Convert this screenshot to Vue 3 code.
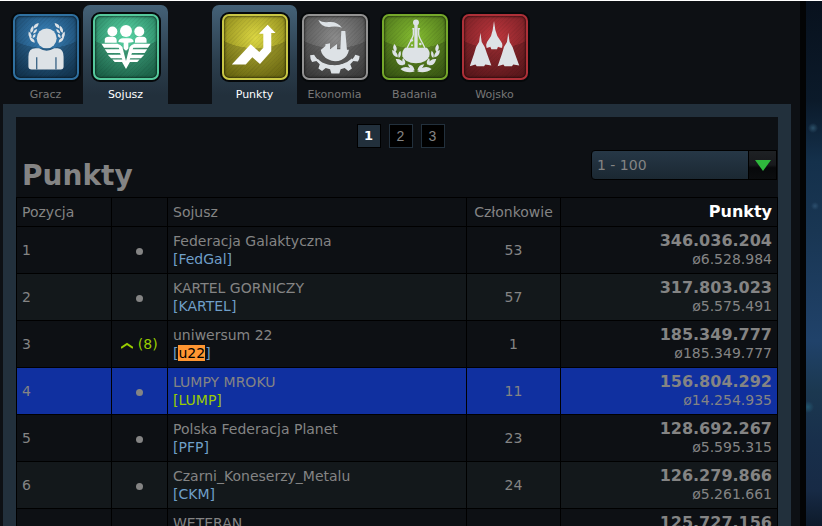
<template>
  <div class="page">
    <main class="content">
      <nav class="tabs">
        <button
          v-for="tab in tabs"
          :key="tab.id"
          type="button"
          class="tab"
          :class="[tab.id, { active: isActive(tab), first: tab.id === 'points' }]"
          @click="selectTab(tab)"
        >
          <span class="tab-icon">
            <svg viewBox="0 0 198 198" aria-hidden="true">
              <g v-if="tab.id === 'player'">
                <circle cx="101" cy="73" r="30" />
                <path d="M46 128Q46 103 68 103H78Q101 118 124 103H134Q152 105 152 128V158Q152 167 143 167H56Q46 167 46 158Z" />
                <path class="cut" d="M71 130V167M129 130V167" />
                <path d="M77 27Q61 30 62 43Q76 41 77 27ZM60 35Q48 45 53 57Q65 50 60 35ZM47 52Q44 66 53 74Q61 63 47 52ZM49 70Q51 85 65 86Q65 73 49 70ZM72 45Q62 47 60 58Q71 58 72 45ZM67 59Q58 62 59 72Q69 70 67 59Z" />
                <path d="M125 27Q141 30 140 43Q126 41 125 27ZM142 35Q154 45 149 57Q137 50 142 35ZM155 52Q158 66 149 74Q141 63 155 52ZM153 70Q151 85 137 86Q137 73 153 70ZM130 45Q140 47 142 58Q131 58 130 45ZM135 59Q144 62 143 72Q133 70 135 59Z" />
              </g>
              <g v-else-if="tab.id === 'alliance'">
                <circle cx="58" cy="52" r="15" />
                <circle cx="99" cy="51" r="18" />
                <circle cx="139" cy="52" r="15" />
                <path d="M35 86V76Q36 68 47 68H59Q69 68 71 78V86ZM126 86V78Q128 68 138 68H151Q160 69 161 77V86ZM76 84Q77 73 90 73H108Q121 73 122 84L106 86V104L99 110L92 104V86Z" />
                <path d="M25 89H73Q83 91 88 99L99 141L110 99Q115 91 125 89H173L165 101H121L119 106H163L155 117H117L115 122H154L144 133H112L110 137H140L133 144H111L99 165L87 144H65L58 137H88L86 133H54L44 122H83L81 117H43L35 106H79L77 101H33Z" />
              </g>
              <path
                v-else-if="tab.id === 'points'"
                d="M29 152L86 91L112 114L124 101V59H111L137 32L161 57H148V112L114 150L91 130L71 152Z"
              />
              <g v-else-if="tab.id === 'economy'">
                <path d="M49 18Q63 27 79 24Q105 21 120 41Q103 35 87 38Q58 42 49 18Z" />
                <path d="M118 51H130L135 107H141Q138 128 118 138Q98 146 78 136Q60 127 56 108L70 96V91L84 88V106L105 90V106H115Z" />
                <path d="M24 124L36 122Q41 130 46 136L51 132Q70 154 98 154Q126 154 146 131L151 136Q157 130 160 122L173 126Q173 137 168 143L154 141L145 151L150 164L139 171L128 162L116 166L112 179H88L84 166L71 162L60 171L49 164L53 151L43 141L30 144Q24 137 24 124Z" />
                <path class="ring" d="M42 118Q56 149 98 149Q139 148 154 118" />
              </g>
              <g v-else-if="tab.id === 'research'">
                <circle cx="102" cy="25" r="9" />
                <path d="M97 26H107V103H97Z" />
                <path class="line" d="M94 44V62Q92 72 81 90L74 105M110 44V62Q112 72 123 90L130 105M91 44H97M107 44H114" />
                <path d="M69 101H135Q146 112 142 127Q135 147 102 148Q68 147 61 127Q58 112 69 101Z" />
                <circle cx="89" cy="79" r="4" /><circle cx="115" cy="90" r="4" /><circle cx="90" cy="94" r="3" />
                <path d="M37 90Q50 104 40 115Q28 101 37 90ZM30 108Q48 113 47 130Q30 127 30 108ZM55 110Q60 125 50 132Q45 119 55 110ZM41 135Q62 134 65 153Q47 158 41 135ZM63 132Q75 146 66 153Q57 141 63 132ZM55 165Q70 154 90 165L98 173Q72 179 55 165ZM77 151Q94 151 98 170Q83 166 77 151Z" />
                <path d="M167 90Q154 104 164 115Q176 101 167 90ZM174 108Q156 113 157 130Q174 127 174 108ZM149 110Q144 125 154 132Q159 119 149 110ZM163 135Q142 134 139 153Q157 158 163 135ZM141 132Q129 146 138 153Q147 141 141 132ZM149 165Q134 154 114 165L106 173Q132 179 149 165ZM127 151Q110 151 106 170Q121 166 127 151Z" />
              </g>
              <g v-else>
                <path d="M96 21L100 48L106 66L118 84Q124 94 119 102L108 98L105 106H88L85 98L74 102Q70 93 75 84L87 66L92 48Z" />
                <path d="M55 56L59 84L68 99L75 119L88 155L70 152L66 157H44L40 152L23 157L36 119L42 99L51 84Z" />
                <path d="M139 56L143 84L152 99L159 119L172 155L154 152L150 157H128L124 152L107 157L120 119L126 99L135 84Z" />
              </g>
            </svg>
          </span>
          <span class="tab-label">{{ tab.label }}</span>
        </button>
      </nav>

      <section class="frame">
        <div class="pager">
          <button
            v-for="n in 3"
            :key="n"
            type="button"
            class="page-button"
            :class="{ current: n === page }"
            @click="page = n"
          >{{ n }}</button>
        </div>

        <header class="heading">
          <h1>Punkty</h1>
          <div class="range">
            <select v-model="range" aria-label="Pozycja">
              <option>1 - 100</option>
            </select>
            <span class="range-arrow">
              <svg viewBox="0 0 16 11" aria-hidden="true"><path d="M0 0H16L8 11Z" /></svg>
            </span>
          </div>
        </header>

        <table class="ranking">
          <colgroup>
            <col class="col-position" />
            <col class="col-trend" />
            <col />
            <col class="col-members" />
            <col class="col-points" />
          </colgroup>
          <thead>
            <tr>
              <th>Pozycja</th>
              <th></th>
              <th>Sojusz</th>
              <th class="center">Członkowie</th>
              <th class="sorted">Punkty</th>
            </tr>
          </thead>
          <tbody>
            <tr v-for="row in rows" :key="row.name" :class="{ own: row.own }">
              <td>{{ row.position }}</td>
              <td class="center">
                <span v-if="row.up" class="up">
                  <svg viewBox="0 0 12 7" aria-hidden="true"><path d="M0 6L6 2L12 6" /></svg>
                  ({{ row.up }})
                </span>
                <span v-else class="dot"></span>
              </td>
              <td>
                <div>{{ row.name }}</div>
                <div class="second">
                  <a v-if="row.tag" href="#">[<mark v-if="row.found">{{ row.tag }}</mark><template v-else>{{ row.tag }}</template>]</a>
                </div>
              </td>
              <td class="center">{{ row.members }}</td>
              <td class="right">
                <div class="total">{{ row.points }}</div>
                <div class="second">{{ row.average }}</div>
              </td>
            </tr>
          </tbody>
        </table>
      </section>
    </main>
    <aside class="space"></aside>
  </div>
</template>

<script setup>
import { ref } from "vue";

const tabs = [
  { id: "player", label: "Gracz", group: "who" },
  { id: "alliance", label: "Sojusz", group: "who" },
  { id: "points", label: "Punkty", group: "type" },
  { id: "economy", label: "Ekonomia", group: "type" },
  { id: "research", label: "Badania", group: "type" },
  { id: "military", label: "Wojsko", group: "type" },
];

// One tab is active in each group
const selected = ref({ who: "alliance", type: "points" });
const page = ref(1);
const range = ref("1 - 100");

const rows = ref([
  { position: 1, name: "Federacja Galaktyczna", tag: "FedGal", members: 53, points: "346.036.204", average: "ø6.528.984" },
  { position: 2, name: "KARTEL GORNICZY", tag: "KARTEL", members: 57, points: "317.803.023", average: "ø5.575.491" },
  { position: 3, name: "uniwersum 22", tag: "u22", members: 1, points: "185.349.777", average: "ø185.349.777", up: 8, found: true },
  { position: 4, name: "LUMPY MROKU", tag: "LUMP", members: 11, points: "156.804.292", average: "ø14.254.935", own: true },
  { position: 5, name: "Polska Federacja Planet", tag: "PFP", members: 23, points: "128.692.267", average: "ø5.595.315" },
  { position: 6, name: "Czarni_Koneserzy_Metalu", tag: "CKM", members: 24, points: "126.279.866", average: "ø5.261.661" },
  { name: "WETERAN", points: "125.727.156" },
]);

const isActive = (tab) => selected.value[tab.group] === tab.id;

const selectTab = (tab) => {
  selected.value[tab.group] = tab.id;
};
</script>

<style>
body {
  background: #0d1014;
}
</style>

<style scoped>
.page {
  display: flex;
  height: 100vh;
  overflow: hidden;
  box-sizing: border-box;
  border-top: 1px solid #fff;
  color: #848484;
  font-family: Verdana, "DejaVu Sans", sans-serif;
  font-size: 14px;
  line-height: 18px;
}

button,
select {
  font-family: inherit;
}

.content {
  flex: 1;
  min-width: 0;
  padding: 4px 9px 0 3px;
  background: #0d1014;
  border-right: 6px solid #030405;
}

.space {
  width: 16px;
  background:
    radial-gradient(circle at 7px 127px, #2c5068 0, transparent 5px),
    radial-gradient(circle at 9px 205px, #2c4f6e 0, transparent 4px),
    radial-gradient(circle at 2px 406px, #24566e 0, transparent 6px),
    linear-gradient(#08111d 0, #0b1a2a 100px, #14304b 160px, #193653 230px, #20426a 340px, #1b3850 390px, #182f4b 440px, #172a45 490px, #0d1a2a 100%);
}

/* tabs */
.tabs {
  display: flex;
}

.tab {
  width: 85px;
  height: 99px;
  margin-right: -5px;
  padding: 7px 0 0;
  display: flex;
  flex-direction: column;
  align-items: center;
  gap: 4px;
  border: none;
  border-radius: 7px 7px 0 0;
  background: none;
  color: #777;
  cursor: pointer;
}

.tab.first {
  margin-left: 49px;
}

.tab.active {
  background: linear-gradient(#446177, #2c3f4e 55px, #22303c 90px);
  color: #fff;
}

.tab-icon {
  width: 70px;
  height: 70px;
  box-sizing: border-box;
  padding: 2px;
  border-radius: 9px;
  background: #05080a;
}

.tab-icon svg {
  display: block;
  width: 66px;
  height: 66px;
  box-sizing: border-box;
  border-radius: 7px;
  border: 2px solid var(--edge);
  background:
    radial-gradient(ellipse 80% 52% at 50% 0, transparent 99%, rgba(0, 0, 0, 0.18) 100%),
    repeating-linear-gradient(135deg, rgba(0, 0, 0, 0.05) 0 1px, transparent 1px 3px),
    radial-gradient(circle at 50% 35%, var(--light), var(--dark) 85%);
  box-shadow: inset 0 0 3px #000;
  fill: #fff;
}

.tab-icon g,
.tab-icon svg > path {
  transform: scale(1.06);
  transform-origin: 99px 99px;
}

.tab:not(.active) svg {
  fill: #dde2e6;
}

.player { --edge: #2f70a0; --light: #3c87c0; --dark: #174163; }
.alliance { --edge: #55c99c; --light: #5cd9a9; --dark: #237b5b; }
.points { --edge: #c9c745; --light: #dcd743; --dark: #858116; }
.economy { --edge: #929292; --light: #8c8c8c; --dark: #4b4b4b; }
.research { --edge: #75a82b; --light: #85bd31; --dark: #486e19; }
.military { --edge: #ad3038; --light: #c0373e; --dark: #701d22; }

.cut {
  fill: none;
  stroke: #3a6486;
  stroke-width: 4;
}

.ring {
  fill: none;
  stroke: #555;
  stroke-width: 9;
}

.line {
  fill: none;
  stroke: #dde2e6;
  stroke-width: 4;
}

.tab-label {
  font-size: 11px;
  line-height: 18px;
}

/* panel */
.frame {
  border: 13px solid #22303c;
  background: #0d1014;
}

.pager {
  display: flex;
  justify-content: center;
  gap: 8px;
  padding: 7px 0 0 7px;
}

.page-button {
  width: 24px;
  height: 24px;
  padding: 0;
  border: 1px solid #22303c;
  background: #000;
  color: #848484;
  font-family: "Liberation Sans", sans-serif;
  font-size: 14px;
  line-height: 20px;
}

.page-button.current {
  border-color: #000;
  background: #22303c;
  color: #fff;
  font-family: "DejaVu Sans", sans-serif;
  font-size: 13px;
  font-weight: bold;
}

.heading {
  display: flex;
  justify-content: space-between;
  height: 49px;
}

h1 {
  margin: 10px 0 0 6px;
  font-size: 28px;
  line-height: 36px;
}

.range {
  display: grid;
  grid-template-columns: 157px 29px;
  height: 30px;
  margin: 2px 1px 0 0;
}

.range select {
  grid-area: 1 / 1 / 2 / 3;
  appearance: none;
  padding: 0 5px;
  border: 1px solid #000;
  border-radius: 4px 0 0 4px;
  background: linear-gradient(#263746, #1b2832);
  color: #848484;
  font-size: 14px;
}

.range-arrow {
  grid-area: 1 / 2 / 2 / 3;
  display: flex;
  align-items: center;
  justify-content: center;
  border: 1px solid #000;
  background: linear-gradient(#1e2124, #17191c 50%, #07080a 60%, #0b0d0f);
  pointer-events: none;
}

.range-arrow svg {
  width: 16px;
  height: 11px;
  fill: #2fb83d;
}

/* ranking table */
.ranking {
  width: 100%;
  table-layout: fixed;
  border-collapse: collapse;
}

.col-position {
  width: 95px;
}

.col-trend {
  width: 56px;
}

.col-members {
  width: 94px;
}

.col-points {
  width: 217px;
}

th,
td {
  padding: 0 5px;
  border: 1px solid #000;
  font-weight: normal;
  text-align: left;
}

th {
  height: 28px;
}

td {
  height: 46px;
}

tbody tr:nth-child(even) {
  background: #13181b;
}

tbody tr.own {
  background: #1030a0;
}

th.center,
td.center {
  text-align: center;
}

td.right {
  text-align: right;
}

th.sorted {
  color: #fff;
  font-size: 16px;
  font-weight: bold;
  text-align: right;
}

.total {
  font-size: 16px;
  font-weight: bold;
}

.second {
  min-height: 18px;
}

.dot {
  display: inline-block;
  width: 7px;
  height: 7px;
  border-radius: 50%;
  background: #848484;
}

.up {
  color: #9c0;
}

.up svg {
  width: 12px;
  height: 7px;
  fill: none;
  stroke: #9c0;
  stroke-width: 2;
}

a {
  color: #6f9fc8;
  text-decoration: none;
}

.own a {
  color: #9c0;
}

mark {
  background: #ff9632;
  color: #000;
}
</style>
